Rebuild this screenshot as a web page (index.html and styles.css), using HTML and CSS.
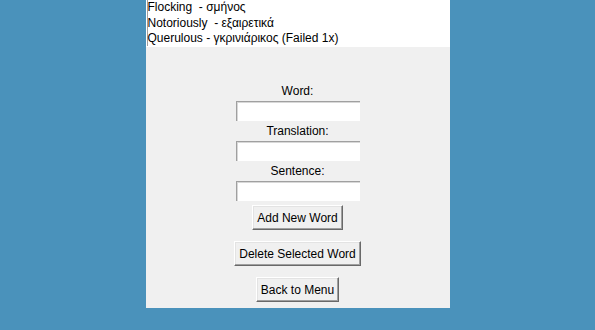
FILE: index.html
```html
<!DOCTYPE html>
<html lang="en">
<head>
  <meta charset="UTF-8" />
  <title>Manage Words</title>
  <link rel="stylesheet" href="styles.css">
</head>
<body>
  <div class="window">
    <div class="listbox">
      <div class="item">Flocking  - σμήνος</div>
      <div class="item">Notoriously  - εξαιρετικά</div>
      <div class="item">Querulous - γκρινιάρικος (Failed 1x)</div>
    </div>

    <div class="form">
      <label class="field-label" for="word">Word:</label>
      <input class="entry" type="text" id="word" />

      <label class="field-label" for="translation">Translation:</label>
      <input class="entry" type="text" id="translation" />

      <label class="field-label" for="sentence">Sentence:</label>
      <input class="entry" type="text" id="sentence" />

      <button class="btn">Add New Word</button>
      <button class="btn">Delete Selected Word</button>
      <button class="btn">Back to Menu</button>
    </div>
  </div>
</body>
</html>
```

FILE: styles.css
```css
body {
  margin: 0;
  padding: 0;
  background: #4a92bb;
  font-family: 'Liberation Sans', Arial, sans-serif;
  font-size: 12px;
  color: #000;
}
.window {
  width: 304px;
  height: 308px;
  margin: 0 auto;
  background: #f0f0f0;
}
.listbox {
  background: #fff;
  height: 46px;
  border-bottom: 1px solid #fff;
  box-shadow: inset 1px 0 0 #fff, inset 2px 0 0 #a0a0a0;
  padding-left: 2px;
  font-size: 12px;
  overflow: hidden;
}
.item {
  white-space: pre;
  line-height: 15.5px;
}
.form {
  display: flex;
  flex-direction: column;
  align-items: center;
  padding-top: 34px;
}
.field-label {
  line-height: 20px;
  height: 20px;
}
.entry {
  box-sizing: border-box;
  width: 124px;
  height: 20px;
  margin: 0;
  padding: 0 2px;
  background: #fff;
  border: none;
  border-top: 1px solid #a0a0a0;
  border-left: 1px solid #a0a0a0;
  box-shadow: inset 1px 1px 0 #d8d8d8;
  font: inherit;
  outline: none;
}
.btn {
  box-sizing: border-box;
  height: 25px;
  margin-top: 4px;
  margin-bottom: 6px;
  padding: 0 4px;
  background: #f0f0f0;
  font: inherit;
  color: #000;
  border: 1px solid;
  border-color: #fff #696969 #696969 #fff;
  box-shadow: inset -1px -1px 0 #a0a0a0, inset 1px 1px 0 #e3e3e3;
}
.btn + .btn {
  margin-top: 5px;
}
```
